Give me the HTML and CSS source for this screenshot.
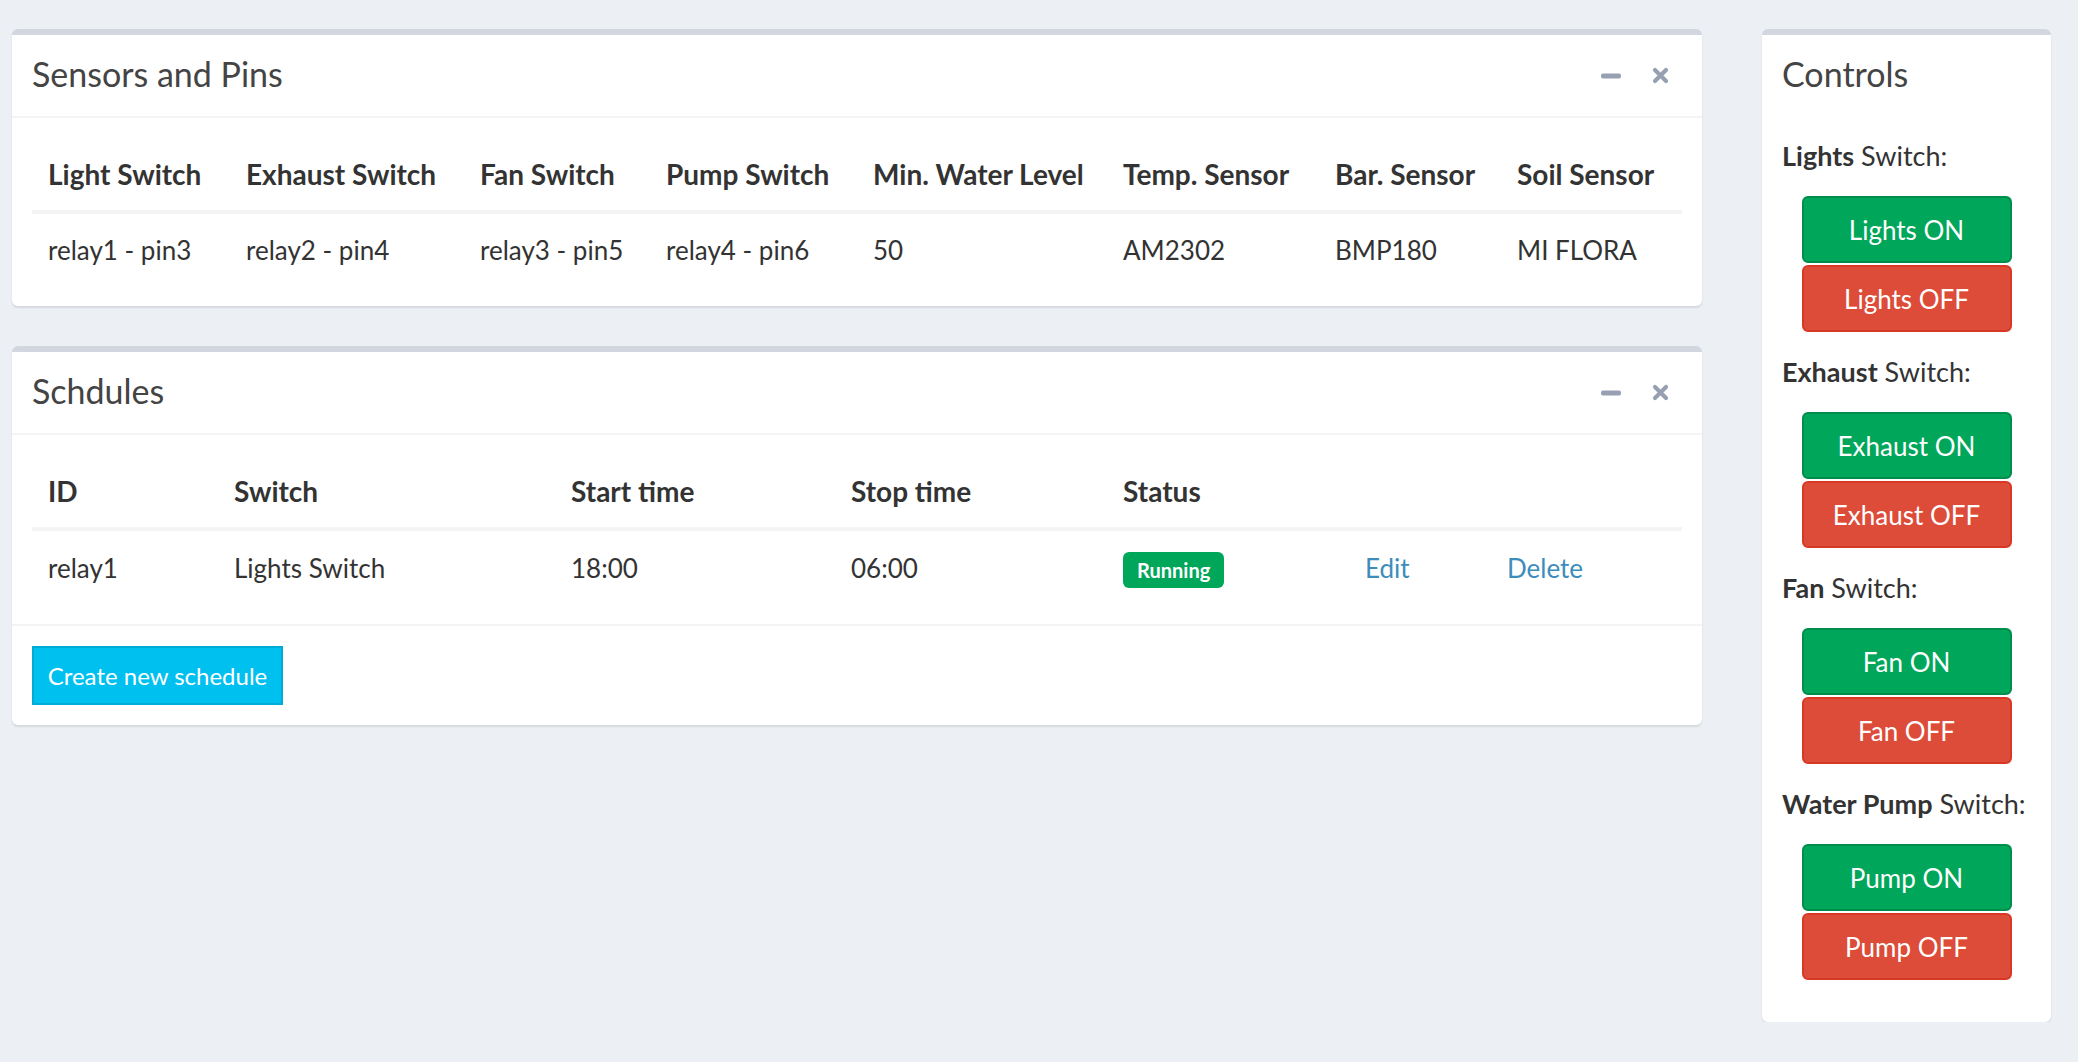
FILE: index.html
```html
<!DOCTYPE html>
<html lang="en">
<head>
<meta charset="utf-8">
<title>Dashboard</title>
<link rel="stylesheet" href="styles.css">
</head>
<body>
<div class="page">
  <div class="main">
    <section class="box">
      <div class="box-header with-border">
        <h3 class="box-title">Sensors and Pins</h3>
        <div class="box-tools">
          <svg class="tool" width="20" height="6" viewBox="0 0 20 6"><rect x="0" y="0.5" width="20" height="5" rx="2" fill="#97a0b3"/></svg>
          <svg class="tool" width="17" height="17" viewBox="0 0 17 17"><path d="M3 3 L14 14 M14 3 L3 14" stroke="#97a0b3" stroke-width="4.2" stroke-linecap="round"/></svg>
        </div>
      </div>
      <div class="box-body">
        <table class="table">
          <thead>
            <tr>
              <th class="w198">Light Switch</th>
              <th class="w234">Exhaust Switch</th>
              <th class="w186">Fan Switch</th>
              <th class="w207">Pump Switch</th>
              <th class="w250">Min. Water Level</th>
              <th class="w212">Temp. Sensor</th>
              <th class="w182">Bar. Sensor</th>
              <th class="w181">Soil Sensor</th>
            </tr>
          </thead>
          <tbody>
            <tr>
              <td>relay1 - pin3</td>
              <td>relay2 - pin4</td>
              <td>relay3 - pin5</td>
              <td>relay4 - pin6</td>
              <td>50</td>
              <td>AM2302</td>
              <td>BMP180</td>
              <td>MI FLORA</td>
            </tr>
          </tbody>
        </table>
      </div>
    </section>

    <section class="box">
      <div class="box-header with-border">
        <h3 class="box-title">Schdules</h3>
        <div class="box-tools">
          <svg class="tool" width="20" height="6" viewBox="0 0 20 6"><rect x="0" y="0.5" width="20" height="5" rx="2" fill="#97a0b3"/></svg>
          <svg class="tool" width="17" height="17" viewBox="0 0 17 17"><path d="M3 3 L14 14 M14 3 L3 14" stroke="#97a0b3" stroke-width="4.2" stroke-linecap="round"/></svg>
        </div>
      </div>
      <div class="box-body">
        <table class="table">
          <thead>
            <tr>
              <th class="w186">ID</th>
              <th class="w337">Switch</th>
              <th class="w280">Start time</th>
              <th class="w272">Stop time</th>
              <th class="w242">Status</th>
              <th class="w142"></th>
              <th class="w191"></th>
            </tr>
          </thead>
          <tbody>
            <tr>
              <td>relay1</td>
              <td>Lights Switch</td>
              <td>18:00</td>
              <td>06:00</td>
              <td><span class="badge">Running</span></td>
              <td><a class="link" href="#">Edit</a></td>
              <td><a class="link" href="#">Delete</a></td>
            </tr>
          </tbody>
        </table>
      </div>
      <div class="box-footer">
        <button class="btn-info">Create new schedule</button>
      </div>
    </section>
  </div>

  <aside class="side">
    <section class="box controls">
      <div class="box-header">
        <h3 class="box-title">Controls</h3>
      </div>
      <div class="box-body">
        <div class="group">
          <label class="switch-label"><b>Lights</b> Switch:</label>
          <div class="btns">
            <button class="btn on">Lights ON</button>
            <button class="btn off">Lights OFF</button>
          </div>
        </div>
        <div class="group">
          <label class="switch-label"><b>Exhaust</b> Switch:</label>
          <div class="btns">
            <button class="btn on">Exhaust ON</button>
            <button class="btn off">Exhaust OFF</button>
          </div>
        </div>
        <div class="group">
          <label class="switch-label"><b>Fan</b> Switch:</label>
          <div class="btns">
            <button class="btn on">Fan ON</button>
            <button class="btn off">Fan OFF</button>
          </div>
        </div>
        <div class="group">
          <label class="switch-label"><b>Water Pump</b> Switch:</label>
          <div class="btns">
            <button class="btn on">Pump ON</button>
            <button class="btn off">Pump OFF</button>
          </div>
        </div>
      </div>
    </section>
  </aside>
</div>
</body>
</html>
```

FILE: styles.css
```css
* { box-sizing: border-box; }

html, body {
  margin: 0;
  padding: 0;
  background: #ecf0f5;
}

body {
  font-family: Lato, "Open Sans", "Liberation Sans", sans-serif;
  font-size: 26px;
  color: #333;
  line-height: 40px;
}

.page {
  display: flex;
  align-items: flex-start;
  padding: 29px 0 0 12px;
  gap: 60px;
}

.main {
  width: 1690px;
  display: flex;
  flex-direction: column;
  gap: 40px;
}

.side {
  width: 289px;
}

.box {
  background: #fff;
  border-top: 6px solid #d2d6de;
  border-radius: 6px;
  box-shadow: 0 2px 2px rgba(0, 0, 0, 0.1);
}

.box-header {
  display: flex;
  align-items: center;
  justify-content: space-between;
  padding: 18px 33px 22px 20px;
  height: 81px;
}

.box-header.with-border {
  border-bottom: 2px solid #f4f4f4;
  height: 83px;
}

.box-tools {
  display: flex;
  align-items: center;
  gap: 31px;
  margin-top: 4px;
}

.box-title {
  margin: 0;
  font-size: 34px;
  font-weight: 400;
  color: #444;
  line-height: 40px;
}

.tool { display: block; }

.box-body {
  padding: 20px;
}

.table {
  width: 100%;
  border-collapse: collapse;
  table-layout: fixed;
}

.table th,
.table td {
  padding: 16px;
  text-align: left;
  line-height: 40px;
  vertical-align: middle;
  white-space: nowrap;
}

.table th {
  font-weight: 700;
  font-size: 28px;
  border-bottom: 4px solid #f4f4f4;
}

.w142 { width: 142px; }
.w181 { width: 181px; }
.w182 { width: 182px; }
.w186 { width: 186px; }
.w191 { width: 191px; }
.w198 { width: 198px; }
.w207 { width: 207px; }
.w212 { width: 212px; }
.w234 { width: 234px; }
.w242 { width: 242px; }
.w250 { width: 250px; }
.w272 { width: 272px; }
.w280 { width: 280px; }
.w337 { width: 337px; }

.badge {
  display: inline-block;
  vertical-align: middle;
  background: #00a65a;
  color: #fff;
  font-weight: 700;
  font-size: 20px;
  height: 36px;
  line-height: 36px;
  padding: 0 14px;
  border-radius: 6px;
}

.link {
  color: #3c8dbc;
  text-decoration: none;
}

.box-footer {
  border-top: 2px solid #f4f4f4;
  padding: 20px;
}

.btn-info {
  font-family: inherit;
  font-size: 24px;
  color: #fff;
  background: #00c0ef;
  border: 2px solid #00acd6;
  border-radius: 0;
  height: 59px;
  width: 251px;
  padding: 0;
  display: block;
}

.controls .box-body {
  padding: 20px 20px 22px;
}

.group {
  display: flex;
  flex-direction: column;
  margin-bottom: 20px;
}

.switch-label {
  font-weight: 400;
  font-size: 27px;
  line-height: 40px;
  margin-bottom: 20px;
  white-space: nowrap;
}

.switch-label b { font-weight: 700; }

.btns {
  display: flex;
  flex-direction: column;
  gap: 2px;
  align-items: center;
}

.btn {
  font-family: inherit;
  font-size: 26px;
  color: #fff;
  width: 210px;
  height: 67px;
  border-radius: 6px;
  padding: 0;
  display: block;
}

.btn.on {
  background: #00a65a;
  border: 2px solid #008d4c;
}

.btn.off {
  background: #dd4b39;
  border: 2px solid #d73925;
}
```
